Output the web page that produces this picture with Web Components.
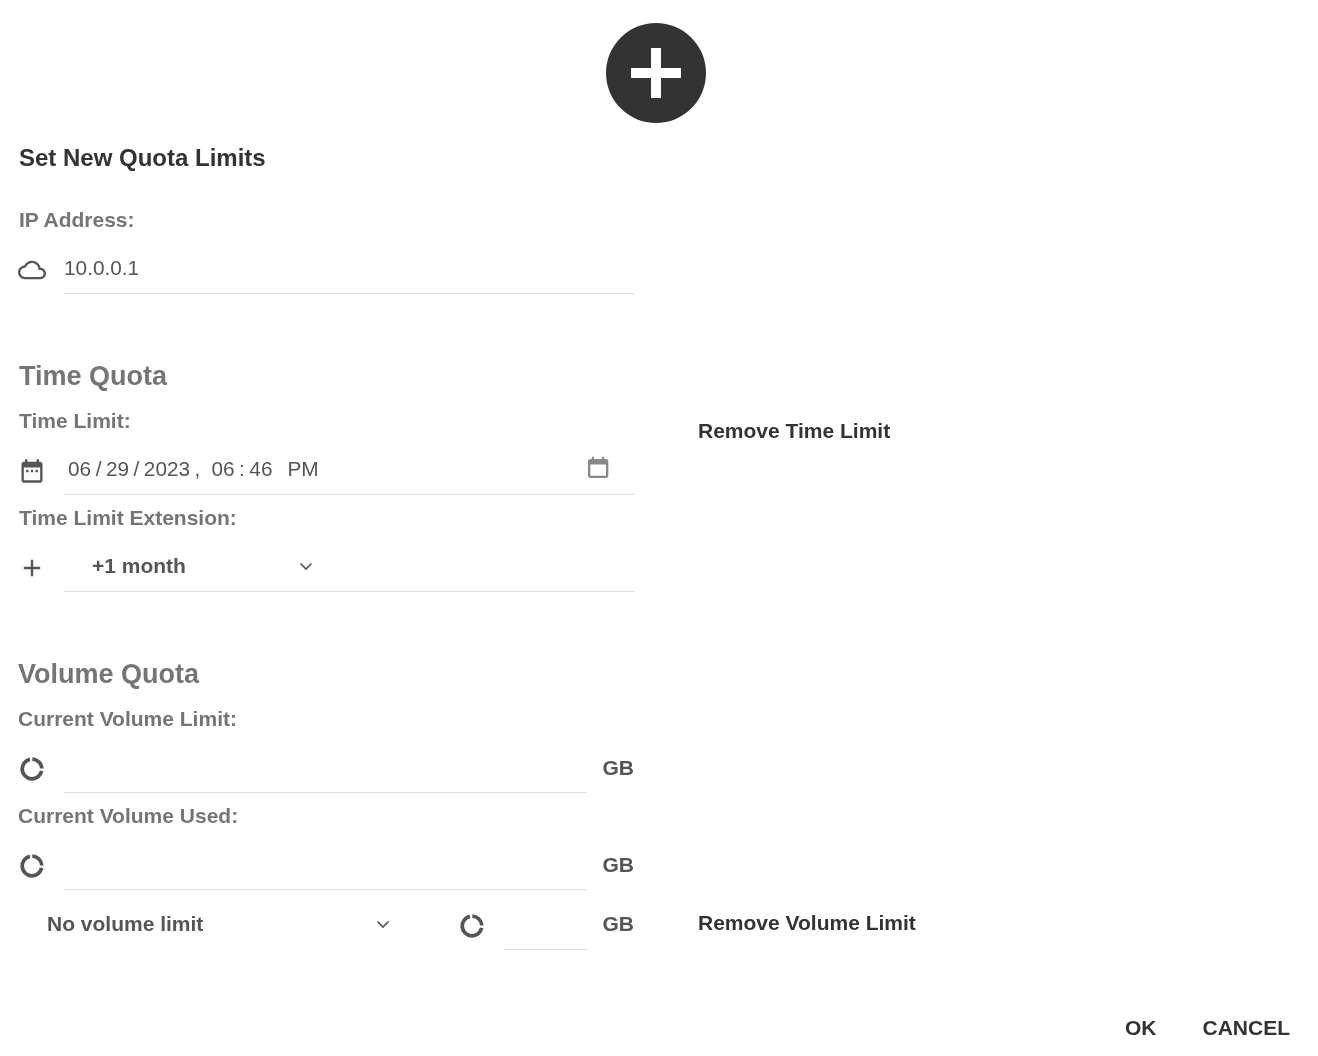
<!DOCTYPE html>
<html lang="en">
<head>
<meta charset="utf-8">
<title>Set New Quota Limits</title>
<style>
  html, body { margin: 0; background: #fff; }
  body { font-family: "Liberation Sans", Arial, sans-serif; height: 1056px; overflow: hidden; }
</style>
</head>
<body>
<quota-dialog>
  <quota-section slot="address">
    <quota-label style="--top:36px;--left:1px">IP Address:</quota-label>
    <quota-field icon="cloud" style="--top:14px"><span>10.0.0.1</span></quota-field>
  </quota-section>

  <quota-section slot="time" action="Remove Time Limit" action-top="57">
    <quota-heading style="--left:1px">Time Quota</quota-heading>
    <quota-label style="--top:17px;--left:1px">Time Limit:</quota-label>
    <quota-field icon="event" style="--top:14px"><quota-date></quota-date></quota-field>
    <quota-label style="--top:11px;--left:1px">Time Limit Extension:</quota-label>
    <quota-field icon="add" style="--top:14px"><quota-select style="--inset:28px;--width:222px">+1 month</quota-select></quota-field>
  </quota-section>

  <quota-section slot="volume">
    <quota-heading>Volume Quota</quota-heading>
    <quota-label style="--top:17px">Current Volume Limit:</quota-label>
    <quota-field icon="donut" unit="GB" style="--top:14px"></quota-field>
    <quota-label style="--top:11px">Current Volume Used:</quota-label>
    <quota-field icon="donut" unit="GB" style="--top:14px"></quota-field>
  </quota-section>

  <quota-section slot="limit" action="Remove Volume Limit" action-top="7">
    <quota-limit-row></quota-limit-row>
  </quota-section>
</quota-dialog>

<script>
const ICONS = {
  cloud: 'M19.35 10.04C18.67 6.59 15.64 4 12 4 9.11 4 6.6 5.64 5.35 8.04 2.34 8.36 0 10.91 0 14c0 3.31 2.69 6 6 6h13c2.76 0 5-2.24 5-5 0-2.64-2.05-4.78-4.65-4.96zM19 18H6c-2.21 0-4-1.79-4-4 0-2.05 1.53-3.76 3.56-3.97l1.07-.11.5-.95C8.08 7.14 9.94 6 12 6c2.62 0 4.88 1.86 5.39 4.43l.3 1.5 1.53.11c1.56.1 2.78 1.41 2.78 2.96 0 1.65-1.35 3-3 3z',
  event: 'M9 11H7v2h2v-2zm4 0h-2v2h2v-2zm4 0h-2v2h2v-2zm2-7h-1V2h-2v2H8V2H6v2H5c-1.11 0-1.99.9-1.99 2L3 20c0 1.1.89 2 2 2h14c1.1 0 2-.9 2-2V6c0-1.1-.9-2-2-2zm0 16H5V9h14v11z',
  add: 'M19 13h-6v6h-2v-6H5v-2h6V5h2v6h6v2z',
  donut: 'M12.35 2.01L12.24 5.2A6.8 6.8 0 0 1 18.79 11.64L21.99 11.48A10 10 0 0 0 12.35 2.01zM21.82 13.91L18.67 13.3A6.8 6.8 0 1 1 10.59 5.35L9.92 2.22A10 10 0 1 0 21.82 13.91z',
};

function iconMarkup(name) {
  return `<svg viewBox="0 0 24 24" width="28" height="28" fill="currentColor" aria-hidden="true"><path d="${ICONS[name]}"/></svg>`;
}

class QuotaDialog extends HTMLElement {
  connectedCallback() {
    if (this.shadowRoot) return;
    const shadow = this.attachShadow({ mode: 'open' });
    shadow.innerHTML = `
      <style>
        :host { display:flex; flex-direction:column; height:1056px; box-sizing:border-box; padding:23px 0 0 18px; color:#333; will-change:transform; }
        .badge { align-self:center; margin-left:-24px; width:100px; height:100px; border-radius:50%; background:#333; display:flex; align-items:center; justify-content:center; }
        .badge svg { display:block; }
        h2 { margin:21px 0 0 1px; font-size:24px; line-height:28px; font-weight:700; color:#333; }
        .gap-time { height:66px; }
        .gap-volume { height:66px; }
        .gap-limit { height:12px; }
        footer { margin-top:auto; padding:0 28px 12px 0; display:flex; justify-content:flex-end; gap:46px; }
        button { all:unset; font:700 21px/32px "Liberation Sans", Arial, sans-serif; color:#333; }
      </style>
      <div class="badge">
        <svg viewBox="0 0 50 50" width="50" height="50" fill="#fff"><path d="M20 0h10v20h20v10H30v20H20V30H0V20h20z"/></svg>
      </div>
      <h2>Set New Quota Limits</h2>
      <slot name="address"></slot>
      <div class="gap-time"></div>
      <slot name="time"></slot>
      <div class="gap-volume"></div>
      <slot name="volume"></slot>
      <div class="gap-limit"></div>
      <slot name="limit"></slot>
      <footer><button type="button">OK</button><button type="button">CANCEL</button></footer>
    `;
  }
}

class QuotaSection extends HTMLElement {
  connectedCallback() {
    if (this.shadowRoot) return;
    const shadow = this.attachShadow({ mode: 'open' });
    const action = this.getAttribute('action');
    const top = this.getAttribute('action-top') || 0;
    shadow.innerHTML = `
      <style>
        :host { display:grid; grid-template-columns:616px auto; column-gap:64px; justify-content:start; }
        .main { display:flex; flex-direction:column; }
        .action { padding-top:${top}px; font:700 21px/28px "Liberation Sans", Arial, sans-serif; color:#333; }
      </style>
      <div class="main"><slot></slot></div>
      ${action ? `<div class="action">${action}</div>` : ''}
    `;
  }
}

class QuotaHeading extends HTMLElement {
  connectedCallback() {
    if (this.shadowRoot) return;
    this.attachShadow({ mode: 'open' }).innerHTML = `
      <style>
        :host { display:block; margin-left:var(--left, 0); font:700 27px/32px "Liberation Sans", Arial, sans-serif; color:#757575; }
      </style>
      <slot></slot>
    `;
  }
}

class QuotaLabel extends HTMLElement {
  connectedCallback() {
    if (this.shadowRoot) return;
    this.attachShadow({ mode: 'open' }).innerHTML = `
      <style>
        :host { display:block; margin:var(--top, 0) 0 0 var(--left, 0); font:700 21px/24px "Liberation Sans", Arial, sans-serif; color:#757575; }
      </style>
      <slot></slot>
    `;
  }
}

class QuotaField extends HTMLElement {
  connectedCallback() {
    if (this.shadowRoot) return;
    const shadow = this.attachShadow({ mode: 'open' });
    const unit = this.getAttribute('unit');
    shadow.innerHTML = `
      <style>
        :host { display:flex; margin-top:var(--top, 0); height:48px; font:400 20.8px/24px "Liberation Sans", Arial, sans-serif; color:#555; }
        .icon { width:46px; flex:none; padding-top:10px; color:#555; box-sizing:border-box; }
        .icon svg { display:block; }
        .line { flex:1; min-width:0; box-sizing:border-box; border-bottom:1px solid #ddd; display:flex; align-items:center; padding-bottom:4px; }
        .unit { width:48px; flex:none; text-align:right; padding:11px 0 0 0; box-sizing:border-box; font-weight:700; font-size:21px; }
      </style>
      <div class="icon">${iconMarkup(this.getAttribute('icon'))}</div>
      <div class="line"><slot></slot></div>
      ${unit ? `<div class="unit">${unit}</div>` : ''}
    `;
  }
}

class QuotaDate extends HTMLElement {
  connectedCallback() {
    if (this.shadowRoot) return;
    const shadow = this.attachShadow({ mode: 'open' });
    shadow.innerHTML = `
      <style>
        :host { display:flex; flex:1; align-items:center; padding-left:4px; font:400 20.8px/24px "Liberation Sans", Arial, sans-serif; color:#555; }
        .seg { display:flex; gap:4.5px; }
        .time { margin-left:11px; }
        .ampm { margin-left:15px; }
        svg { margin:0 25px 2px auto; display:block; }
      </style>
      <div class="seg"><span>06</span><span>/</span><span>29</span><span>/</span><span>2023</span><span>,</span></div>
      <div class="seg time"><span>06</span><span>:</span><span>46</span></div>
      <span class="ampm">PM</span>
      <svg width="22" height="23" viewBox="0 0 22 23" aria-hidden="true">
        <path d="M5 .7h2V4H5zM15 .7h2V4h-2z" fill="#888"/>
        <path d="M3.500 3h15.300a2.500 2.500 0 0 1 2.500 2.500v14a2.500 2.500 0 0 1-2.500 2.500H3.500A2.500 2.500 0 0 1 1 19.500v-14A2.500 2.500 0 0 1 3.500 3zM3.300 8.500v11c0 .2.100.3.300.3h15.100c.2 0 .3-.1.300-.3v-11z" fill="#888" fill-rule="evenodd"/>
      </svg>
    `;
  }
}

class QuotaSelect extends HTMLElement {
  connectedCallback() {
    if (this.shadowRoot) return;
    this.attachShadow({ mode: 'open' }).innerHTML = `
      <style>
        :host { display:flex; align-items:center; box-sizing:border-box; width:calc(var(--width, 222px) + var(--inset, 28px)); padding-left:var(--inset, 28px); font:700 21px/24px "Liberation Sans", Arial, sans-serif; color:#555; }
        .text { flex:1; }
        svg { display:block; }
      </style>
      <span class="text"><slot></slot></span>
      <svg width="16" height="10" viewBox="0 0 16 10" aria-hidden="true"><path d="M2.500 2.500L8 8l5.500-5.500" fill="none" stroke="#555" stroke-width="1.700"/></svg>
    `;
  }
}

class QuotaLimitRow extends HTMLElement {
  connectedCallback() {
    if (this.shadowRoot) return;
    this.attachShadow({ mode: 'open' }).innerHTML = `
      <style>
        :host { display:flex; height:48px; font:700 21px/24px "Liberation Sans", Arial, sans-serif; color:#555; }
        quota-select { --inset:29px; --width:344px; height:44px; flex:none; }
        .icon { margin-left:67px; padding-top:10px; width:46px; flex:none; box-sizing:border-box; color:#555; }
        .icon svg { display:block; }
        .line { width:83px; flex:none; border-bottom:1px solid #ddd; box-sizing:border-box; }
        .unit { flex:1; text-align:right; padding:10px 0 0 0; box-sizing:border-box; }
      </style>
      <quota-select>No volume limit</quota-select>
      <div class="icon">${iconMarkup('donut')}</div>
      <div class="line"></div>
      <div class="unit">GB</div>
    `;
  }
}

customElements.define('quota-dialog', QuotaDialog);
customElements.define('quota-section', QuotaSection);
customElements.define('quota-heading', QuotaHeading);
customElements.define('quota-label', QuotaLabel);
customElements.define('quota-field', QuotaField);
customElements.define('quota-date', QuotaDate);
customElements.define('quota-select', QuotaSelect);
customElements.define('quota-limit-row', QuotaLimitRow);
</script>
</body>
</html>
